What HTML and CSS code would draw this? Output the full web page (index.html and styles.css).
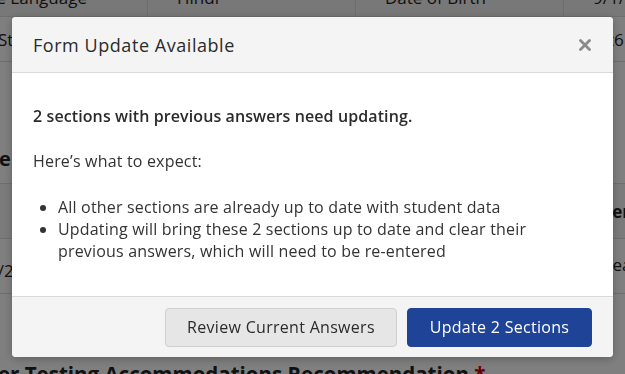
FILE: index.html
```html
<!DOCTYPE html>
<html>
<head>
<meta charset="utf-8">
<link rel="stylesheet" href="styles.css">
</head>
<body>
<div class="page">
  <div class="grid top">
    <div class="cell lbl r">Home Language</div>
    <div class="cell">Hindi</div>
    <div class="cell lbl">Date of Birth</div>
    <div class="cell">9/1/2010</div>
    <div class="cell r2">Student</div>
    <div class="cell"></div>
    <div class="cell"></div>
    <div class="cell t6">Test6</div>
  </div>
  <div class="heading">Name</div>
  <div class="grid second">
    <div class="cell"></div>
    <div class="cell"></div>
    <div class="cell"></div>
    <div class="cell hdr">Gender</div>
    <div class="cell d">9/1/2</div>
    <div class="cell"></div>
    <div class="cell"></div>
    <div class="cell d2">Read</div>
  </div>
  <div class="big">er Testing Accommodations Recommendation <span class="req">*</span></div>
</div>
<div class="overlay"></div>
<div class="modal">
  <div class="mhead">
    <div class="title">Form Update Available</div>
    <svg class="close" width="12" height="12" viewBox="0 0 12 12"><path d="M1.5 1.5 L10.5 10.5 M10.5 1.5 L1.5 10.5" stroke="#8a8a8a" stroke-width="2.8" stroke-linecap="round"/></svg>
  </div>
  <div class="mbody">
    <p class="strong">2 sections with previous answers need updating.</p>
    <p>Here’s what to expect:</p>
    <ul>
      <li>All other sections are already up to date with student data</li>
      <li>Updating will bring these 2 sections up to date and clear their previous answers, which will need to be re-entered</li>
    </ul>
  </div>
  <div class="mfoot">
    <button class="btn sec">Review Current Answers</button>
    <button class="btn pri">Update 2 Sections</button>
  </div>
</div>
</body>
</html>
```
FILE: styles.css
```css
html, body {
  margin: 0;
  padding: 0;
  width: 625px;
  height: 374px;
  overflow: hidden;
  background: #fff;
  font-family: "Open Sans", "Lato", sans-serif;
  color: #333;
}
.page {
  margin-top: -22px;
  margin-left: -60px;
  width: 800px;
}
.grid {
  display: grid;
  grid-template-columns: 208px 208px 208px 176px;
}
.cell {
  border-right: 1px solid #ddd;
  border-bottom: 1px solid #ddd;
  display: flex;
  align-items: center;
  padding: 0 0 0 29px;
  font-size: 17px;
  color: #222;
  box-sizing: border-box;
  white-space: nowrap;
}
.top .cell { height: 39px; }
.top .cell:nth-child(-n+4) { background: #f0f0f0; }
.top .cell.r { justify-content: flex-end; padding: 0 60px 0 0; overflow: hidden; }
.top .cell:nth-child(n+5) { height: 45px; }
.top .cell.r2 { padding-left: 58px; }
.top .cell.t6 { padding-left: 17px; }
.heading {
  height: 122px;
  display: flex;
  align-items: flex-end;
  font-weight: 700;
  font-size: 20px;
  padding: 0 0 11px 11px;
  box-sizing: border-box;
  border-bottom: 1px solid #ddd;
  color: #222;
}
.second .cell { height: 55px; padding-left: 58px; }
.second .cell:nth-child(-n+4) { background: #f7f7f7; }
.second .cell.hdr { font-weight: 700; padding-left: 4px; }
.second .cell.d { padding-left: 32px; align-items: flex-start; padding-top: 20px; }
.second .cell.d2 { padding-left: 38px; align-items: flex-start; padding-top: 14px; }
.big {
  margin-top: 66px;
  margin-left: 58px;
  font-size: 20.5px;
  font-weight: 700;
  color: #222;
  white-space: nowrap;
}
.req { color: #c00; }
.overlay {
  position: fixed;
  inset: 0;
  background: rgba(0, 0, 0, 0.5);
}
.modal {
  position: fixed;
  left: 12px;
  top: 17px;
  width: 601px;
  height: 340px;
  background: #fff;
  border-radius: 4px;
  overflow: hidden;
  display: flex;
  flex-direction: column;
  box-shadow: 0 2px 8px rgba(0,0,0,0.25);
}
.mhead {
  height: 55px;
  background: #f4f4f4;
  border-bottom: 1px solid #d9d9d9;
  display: flex;
  align-items: center;
  justify-content: space-between;
  padding: 0 22px 0 21px;
  flex: none;
}
.title {
  font-size: 18px;
  letter-spacing: 0.55px;
  color: #2b2b2b;
}
.close { display: block; }
.mbody {
  flex: 1;
  padding: 33px 21px 0 21px;
  font-size: 16px;
  letter-spacing: 0.18px;
  color: #333;
}
.mbody p { margin: 0 0 25px 0; line-height: 20px; }
.mbody .strong { font-weight: 600; color: #2b2b2b; letter-spacing: 0.1px; }
.mbody ul {
  margin: 0;
  padding-left: 25px;
  line-height: 22px;
}
.mfoot {
  height: 61px;
  background: #f4f4f4;
  border-top: 1px solid #d9d9d9;
  display: flex;
  align-items: center;
  justify-content: flex-end;
  gap: 10px;
  padding: 0 21px;
  flex: none;
  box-sizing: border-box;
}
.btn {
  height: 39px;
  border-radius: 4px;
  font-family: inherit;
  font-size: 16px;
  font-weight: 500;
  letter-spacing: 0.3px;
  padding: 0;
}
.btn.sec {
  background: #e6e6e6;
  border: 1px solid #cfcfcf;
  color: #2b2b2b;
  width: 232px;
}
.btn.pri {
  background: #1f4497;
  border: 1px solid #1f4497;
  color: #fff;
  width: 185px;
}
```
